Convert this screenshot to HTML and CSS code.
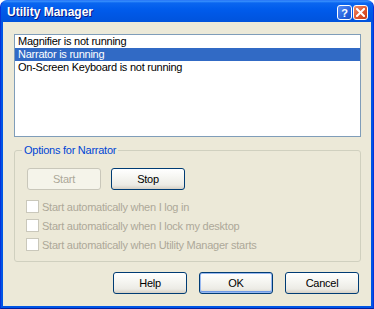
FILE: index.html
```html
<!DOCTYPE html>
<html lang="en">
<head>
    <meta charset="UTF-8">
    <title>Utility Manager</title>
    <link rel="stylesheet" href="styles.css">
</head>
<body>
    <div class="window">
        <div class="titlebar">
            <span class="title">Utility Manager</span>
            <div class="title-buttons">
                <button class="title-btn help-btn">?</button>
                <button class="title-btn close-btn">
                    <svg width="9" height="9" viewBox="0 0 9 9">
                        <path d="M1 1 L8 8 M8 1 L1 8" stroke="#fff" stroke-width="2" stroke-linecap="square"></path>
                    </svg>
                </button>
            </div>
        </div>
        <div class="client">
            <div class="listbox">
                <div class="list-item">Magnifier is not running</div>
                <div class="list-item selected">Narrator is running</div>
                <div class="list-item">On-Screen Keyboard is not running</div>
            </div>

            <fieldset class="group">
                <legend>Options for Narrator</legend>
                <div class="group-buttons">
                    <button class="btn" disabled>Start</button>
                    <button class="btn">Stop</button>
                </div>
                <div class="checks">
                    <label class="check"><span class="box"></span>Start automatically when I log in</label>
                    <label class="check"><span class="box"></span>Start automatically when I lock my desktop</label>
                    <label class="check"><span class="box"></span>Start automatically when Utility Manager starts</label>
                </div>
            </fieldset>

            <div class="dialog-buttons">
                <button class="btn">Help</button>
                <button class="btn default">OK</button>
                <button class="btn">Cancel</button>
            </div>
        </div>
    </div>
</body>
</html>
```

FILE: styles.css
```css
:root {
    --face: #ece9d8;
    --frame: #0055e5;
    --text: #000000;
    --disabled: #aca899;
    --group-text: #0046d5;
}

body {
    margin: 0;
    font-family: "Liberation Sans", Arial, sans-serif;
    font-size: 11px;
    letter-spacing: -0.25px;
}

.window {
    width: 374px;
    height: 309px;
    box-sizing: border-box;
    display: flex;
    flex-direction: column;
    background: var(--frame);
    border-radius: 7px 7px 0 0;
    border: 1px solid #0831d9;
    border-top-color: #2b7cf8;
    border-bottom-color: #001ea0;
    overflow: hidden;
}

.titlebar {
    height: 21px;
    flex-shrink: 0;
    display: flex;
    align-items: center;
    justify-content: space-between;
    padding: 0 5px 0 6px;
    background: linear-gradient(#3d95ff 0, #0a66f0 2px, #005cec 8px, #0058e6 60%, #0053dc 100%);
}

.title {
    color: #ffffff;
    font-weight: bold;
    font-size: 12px;
    letter-spacing: 0;
    text-shadow: 1px 1px #0a1883;
    margin-top: 1px;
}

.title-buttons {
    display: flex;
    gap: 1px;
    margin-top: 2px;
}

.title-btn {
    width: 15px;
    height: 15px;
    padding: 0;
    border: 1px solid #ffffff;
    border-radius: 3px;
    display: flex;
    align-items: center;
    justify-content: center;
    color: #ffffff;
    font-family: "Liberation Sans", Arial, sans-serif;
    font-weight: bold;
    font-size: 11px;
}

.help-btn {
    background: linear-gradient(135deg, #5a8ef5, #2663e0 60%, #1b50c8);
}

.close-btn {
    background: linear-gradient(135deg, #ec8c6c, #e0572f 55%, #c73d17);
}

.client {
    flex: 1;
    margin: 0 2px 2px;
    background: var(--face);
    display: flex;
    flex-direction: column;
    padding: 12px 10px 0 11px;
}

.listbox {
    height: 103px;
    box-sizing: border-box;
    border: 1px solid #7f9db9;
    background: #ffffff;
}

.list-item {
    height: 13px;
    line-height: 13px;
    padding-left: 3px;
    white-space: nowrap;
}

.list-item.selected {
    background: #316ac5;
    color: #ffffff;
}

.group {
    margin: 7px 0 0;
    padding: 0 0 10px;
    border: 1px solid #d0d0bf;
    border-radius: 3px;
    min-width: 0;
}

.group legend {
    margin-left: 7px;
    padding: 0 2px;
    line-height: 13px;
    color: var(--group-text);
}

.group-buttons {
    display: flex;
    gap: 10px;
    margin: 11px 0 0 12px;
}

.btn {
    width: 74px;
    height: 22px;
    padding: 0;
    font-family: "Liberation Sans", Arial, sans-serif;
    font-size: 11px;
    letter-spacing: -0.25px;
    color: var(--text);
    border: 1px solid #003c74;
    border-radius: 3px;
    background: linear-gradient(#ffffff 0, #f6f6f2 40%, #ecebe5 80%, #d6d0c5 100%);
}

.btn:disabled {
    color: var(--disabled);
    border-color: #c9c7ba;
    background: #f5f4ea;
}

.btn.default {
    box-shadow: inset 0 0 0 1px #98b8f0, inset 0 -1px 0 1px #6f9ae6;
}

.checks {
    display: flex;
    flex-direction: column;
    gap: 6px;
    margin: 10px 0 0 11px;
}

.check {
    display: flex;
    align-items: center;
    gap: 3px;
    height: 13px;
    color: var(--disabled);
    white-space: nowrap;
}

.box {
    width: 13px;
    height: 13px;
    box-sizing: border-box;
    border: 1px solid #cac8bb;
    background: #ffffff;
}

.dialog-buttons {
    display: flex;
    justify-content: flex-end;
    gap: 12px;
    margin-top: 10px;
    padding-right: 2px;
}
```
